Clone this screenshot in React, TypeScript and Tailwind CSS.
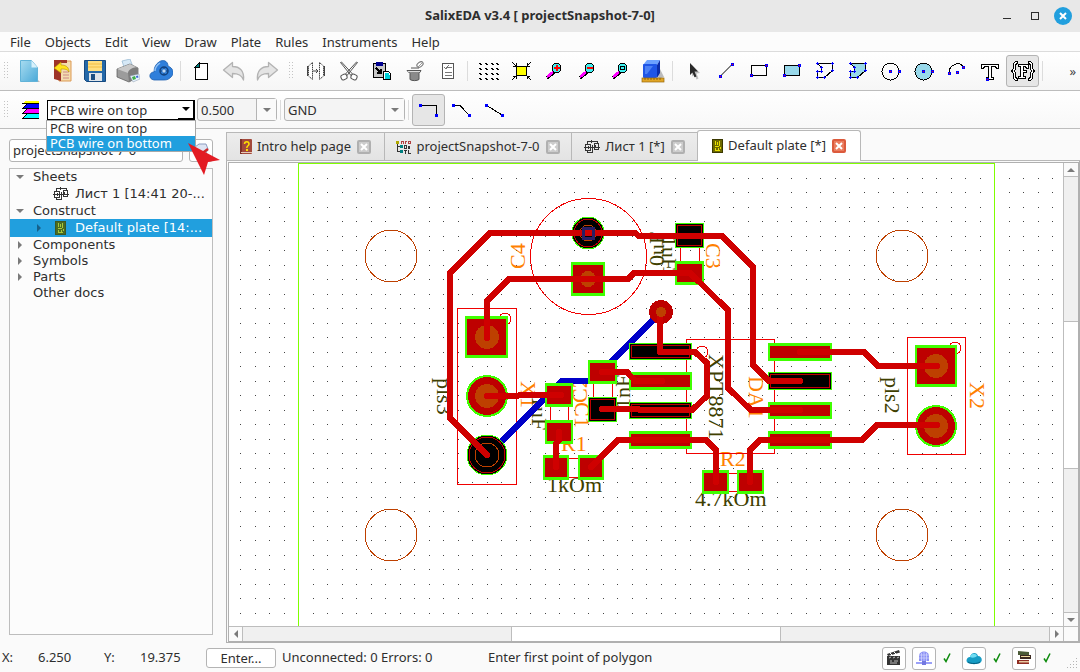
import React from "react";
import clsx from "clsx";

const UI_FONT = "font-['Noto_Sans','Open_Sans',sans-serif]";
const TREE_FONT = "font-['DejaVu_Sans',sans-serif]";

const MENU = ["File", "Objects", "Edit", "View", "Draw", "Plate", "Rules", "Instruments", "Help"];

/* ---------- small shared pieces ---------- */

const Icon: React.FC<{ children: React.ReactNode; crisp?: boolean }> = ({ children, crisp = true }) => (
  <svg
    width="24"
    height="24"
    viewBox="0 0 24 24"
    fill="none"
    aria-hidden="true"
    shapeRendering={crisp ? "crispEdges" : "auto"}
  >
    {children}
  </svg>
);

const Grip = () => (
  <div className="w-3 shrink-0 flex justify-center">
    <svg width="5" height="18" aria-hidden="true">
      {[0, 3, 6, 9, 12, 15].map((y) => (
        <g key={y} fill="#c4c4c4">
          <rect x="0" y={y} width="1" height="1" />
          <rect x="3" y={y} width="1" height="1" />
        </g>
      ))}
    </svg>
  </div>
);

const Separator = () => (
  <div className="w-[7px] shrink-0 flex justify-center">
    <div className="w-px h-5 bg-[#dcdcdc]" />
  </div>
);

const Handle: React.FC<{ x: number; y: number }> = ({ x, y }) => (
  <>
    <rect x={x - 1} y={y - 1} width="3" height="3" fill="#0000ff" />
    <rect x={x} y={y} width="1" height="1" fill="#ff0000" />
  </>
);

const Dot: React.FC<{ x: number; y: number }> = ({ x, y }) => (
  <rect x={x - 1} y={y - 1} width="3" height="3" fill="#0000ff" />
);

const ToolButton: React.FC<{ label: string; pressed?: boolean; children: React.ReactNode }> = ({
  label,
  pressed,
  children,
}) => (
  <button
    type="button"
    aria-label={label}
    aria-pressed={pressed}
    className={clsx(
      "w-[33px] h-8 shrink-0 flex items-center justify-center rounded-[3px]",
      pressed && "bg-[#e6e6e6] border border-[#b4b4b4]"
    )}
  >
    {children}
  </button>
);

const Triangle: React.FC<{ dir: "down" | "up" | "left" | "right"; color?: string }> = ({
  dir,
  color = "#7a7a7a",
}) => {
  const paths = {
    down: "M0 2h8L4 6z",
    up: "M0 6h8L4 2z",
    left: "M6 0v8L2 4z",
    right: "M2 0v8L6 4z",
  };
  return (
    <svg width="8" height="8" aria-hidden="true">
      <path d={paths[dir]} fill={color} />
    </svg>
  );
};

/* ---------- document icons ---------- */

const SheetIcon = () => (
  <svg width="16" height="14" viewBox="0 0 16 14" fill="none" stroke="#333" aria-hidden="true" shapeRendering="crispEdges">
    <path d="M3.5 4V1.500h10V4M7.500 0v3M0 7.500h16M3.500 10v2.500h5M8.500 5v8M4.500 6v3M11.500 5v3" />
    <rect x="1.500" y="4.500" width="5" height="6" />
    <rect x="10.500" y="3.500" width="4" height="6" />
  </svg>
);

const PlateIcon: React.FC<{ dim?: boolean }> = ({ dim }) => (
  <svg width="11" height="14" viewBox="0 0 11 14" aria-hidden="true" shapeRendering="crispEdges">
    <rect x="0.5" y="0.5" width="10" height="13" fill={dim ? "#4a6b22" : "#6e6a00"} stroke={dim ? "#3d5820" : "#3a3800"} />
    <path
      d="M3.500 2v4M5.500 3v3M7.500 2v5M3 7.500h4M3.500 9v3M4 11.500h4M6.500 9v2M8.500 8v2"
      fill="none"
      stroke={dim ? "#a8c83c" : "#e8e000"}
    />
  </svg>
);

const HelpIcon = () => (
  <svg width="12" height="15" viewBox="0 0 12 15" aria-hidden="true">
    <rect width="12" height="15" rx="1" fill="#a34a3c" />
    <rect width="2" height="15" fill="#7c3028" />
    <rect x="1" y="13" width="11" height="1" fill="#e6c9b8" />
    <path d="M4.500 5c0-3 4.500-3 4.500 0 0 2-2.200 1.500-2.200 4" fill="none" stroke="#ffe000" strokeWidth="1.500" />
    <rect x="6" y="10" width="2" height="2" fill="#ffe000" />
  </svg>
);

const ProjectIcon = () => (
  <svg width="15" height="14" viewBox="0 0 15 14" aria-hidden="true" shapeRendering="crispEdges" fill="none">
    <rect x="0" y="1" width="3" height="3" fill="#b0a800" />
    <path d="M1.500 4v8M1 6.500h4M1 11.500h4" stroke="#333" />
    <path d="M5.500 1v3M7.500 1v3M5 1.500h2M9.500 1v3M9 1.500h2M12.500 1v3M14.500 1v3M12 1.500h2M12 3.500h2" stroke="#b04040" />
    <rect x="4" y="5" width="3" height="3" fill="#008080" />
    <rect x="4" y="10" width="3" height="3" fill="#008080" />
    <path d="M8.500 6v3M10.500 6v3M8 5.500h3M8 8.500h3M12 6l2 3M14 6l-2 3M8 10.500h3M9.500 10v4M12.500 10v4M12 13.500h3" stroke="#333" />
  </svg>
);

/* ---------- main toolbar ---------- */

const MainToolbar = () => (
  <div className="h-[39px] flex items-center border-b border-[#bdbdbd] bg-gradient-to-b from-white to-[#f6f6f6]">
    <Grip />
    <ToolButton label="New">
      <Icon crisp={false}>
        <defs>
          <linearGradient id="doc" x1="0" y1="0" x2="1" y2="1">
            <stop offset="0" stopColor="#a9dcf0" />
            <stop offset="1" stopColor="#4aa9d8" />
          </linearGradient>
        </defs>
        <path d="M5 23h18l-3-3z" fill="#bbb" />
        <path d="M3.500 1.500h11l6 7v14h-17z" fill="url(#doc)" stroke="#62b3d8" />
        <path d="M14.500 1.500v7h6z" fill="#d8f1fb" />
      </Icon>
    </ToolButton>
    <ToolButton label="Open">
      <Icon crisp={false}>
        <path d="M9 2h12v20H9z" fill="#f3dcae" stroke="#dd9a55" />
        <path d="M13 13h6M13 16h6M13 19h6" stroke="#c88" />
        <path d="M4 1h13v3H11v18L4 20z" fill="#9e3428" />
        <path d="M4 9l7-6v3c6 0 8 3 8 7-2-3-4-3-8-3v4z" fill="#ffe11c" stroke="#b48c00" strokeWidth=".6" />
      </Icon>
    </ToolButton>
    <ToolButton label="Save">
      <Icon crisp={false}>
        <path d="M1.500 1.500h21v21h-19l-2-2z" fill="#2468a8" stroke="#174a80" />
        <rect x="5" y="2" width="14" height="10" fill="#ffdf80" />
        <path d="M5 5h14M5 8h14" stroke="#f2bd45" />
        <rect x="6" y="14" width="13" height="8" fill="#dfe5ea" />
        <rect x="8" y="15" width="4" height="6" fill="#1c4f82" />
      </Icon>
    </ToolButton>
    <ToolButton label="Print">
      <Icon crisp={false}>
        <path d="M6 2l8-2 3 8-8 3z" fill="#d6e8f6" stroke="#8fb3cf" strokeWidth=".7" />
        <path d="M1 10l13-5 8 4v9l-9 5-12-5z" fill="#9c9c9c" stroke="#555" strokeWidth=".7" />
        <path d="M1 10l13-5 8 4-10 5z" fill="#c9c9c9" />
        <path d="M12 14c0-4 10-8 10-4v8l-9 5z" fill="#7d7d7d" />
        <path d="M14 17l9-2 1 5-7 3z" fill="#e8f4ff" stroke="#89a" strokeWidth=".5" />
        <path d="M16 18l3-1 1 3-3 1z" fill="#3fae49" />
        <path d="M20 17l2-.5.500 2-2 .5z" fill="#3a62d0" />
      </Icon>
    </ToolButton>
    <ToolButton label="Cloud">
      <Icon crisp={false}>
        <path
          d="M5 21c-6-1-5-8 0-8 0-5 2-8 5-10 4-3 9-1 9 4 5 2 7 7 3 11-3 3-5 3-8 3z"
          fill="#2f7fdb"
          stroke="#2061b0"
          strokeWidth=".8"
        />
        <path d="M6 12c0-4 2-6 5-8" stroke="#8fc0f4" strokeWidth="1.500" />
        <circle cx="15" cy="12" r="4" stroke="#12427e" strokeWidth="1.500" />
        <path d="M15 8v8M11 12h8" stroke="#12427e" />
        <circle cx="15" cy="12" r="1.700" fill="#bcd8f5" />
      </Icon>
    </ToolButton>
    <Separator />
    <ToolButton label="Sheet">
      <Icon>
        <path d="M10 4.500h8v16H6.500V8z" fill="#fff" stroke="#000" />
        <path d="M6 8l4-4v4z" fill="#008080" stroke="#000" />
      </Icon>
    </ToolButton>
    <ToolButton label="Undo">
      <Icon crisp={false}>
        <path
          d="M1.500 11L10.500 3.500v4c7 0 12 4 11 13.500-2-5-5-6.500-11-6.500v4z"
          fill="#e4e4e4"
          stroke="#b3b3b3"
          strokeWidth="1.300"
          strokeLinejoin="round"
        />
      </Icon>
    </ToolButton>
    <ToolButton label="Redo">
      <Icon crisp={false}>
        <path
          d="M22.500 11L13.500 3.500v4c-7 0-12 4-11 13.500 2-5 5-6.500 11-6.500v4z"
          fill="#e4e4e4"
          stroke="#b3b3b3"
          strokeWidth="1.300"
          strokeLinejoin="round"
        />
      </Icon>
    </ToolButton>
    <div className="w-4 shrink-0 flex justify-center">
      <Grip />
    </div>
    <ToolButton label="Distance">
      <Icon crisp={false}>
        <g stroke="#444" fill="#fff">
          <path d="M8.500 3.500v17L4.500 17V7zM15.500 3.500v17l4-3.500V7z" strokeDasharray="1.500 .6" />
          <path d="M3.500 7v10M20.500 7v10" />
          <path d="M9 12h5M12 10l2 2-2 2" />
        </g>
      </Icon>
    </ToolButton>
    <ToolButton label="Cut">
      <Icon crisp={false}>
        <g stroke="#555" fill="#fff">
          <path d="M3.500 3.500l1-.5 11 12-1.500 1.500zM20.500 3.500l-1-.5-11 12 1.500 1.500z" />
          <rect x="4" y="15.500" width="6" height="5" rx="2" transform="rotate(-25 7 18)" />
          <rect x="14" y="15.500" width="6" height="5" rx="2" transform="rotate(25 17 18)" />
        </g>
      </Icon>
    </ToolButton>
    <ToolButton label="Paste">
      <Icon>
        <rect x="3.500" y="4.500" width="12" height="14" rx="1" fill="#c8c8c8" stroke="#000" />
        <rect x="6" y="3" width="7" height="4" fill="#000090" />
        <path d="M6 9l5 5M11 10v4H7" stroke="#000" strokeWidth="1.500" />
        <path d="M13.500 12.500h5l2 2v6h-7z" fill="#fff" stroke="#000" />
        <path d="M15 15h4M15 17h5M15 19h5" stroke="#00d0d8" strokeWidth="1.300" />
      </Icon>
    </ToolButton>
    <ToolButton label="Clear">
      <Icon crisp={false}>
        <path d="M4 11.500h14l-2 3v6c-2 1.500-7 1.500-9 0v-6z" fill="#8a8a8a" stroke="#555" />
        <path d="M5 12.500h12" stroke="#ddd" />
        <path d="M8 9h8" stroke="#555" />
        <ellipse cx="17" cy="5.500" rx="3.500" ry="2.200" transform="rotate(-35 17 5.500)" stroke="#777" fill="#fff" />
        <path d="M15 8l4-4" stroke="#999" />
      </Icon>
    </ToolButton>
    <ToolButton label="Check list">
      <Icon>
        <rect x="6.500" y="4.500" width="11" height="15" fill="#fff" stroke="#555" />
        <path d="M12 8.500h4M9 13.500h7M9 16.500h7" stroke="#777" />
        <path d="M8 8l2 2 3-4" stroke="#777" />
      </Icon>
    </ToolButton>
    <Separator />
    <ToolButton label="Grid">
      <Icon>
        {[3, 9, 15, 20].map((x) =>
          [4, 9, 14, 19].map((y) => (
            <path key={`${x}-${y}`} d={`M${x} ${y}h2v1h1v1h-2v-1h-1z`} fill="#000" />
          ))
        )}
      </Icon>
    </ToolButton>
    <ToolButton label="Fit">
      <Icon>
        <rect x="7.500" y="7.500" width="10" height="9" fill="#ffff00" stroke="#000" />
        <path
          d="M3 3l4 4M22 3l-4 4M3 21l4-4M22 21l-4-4M7 4v3H4M18 4v3h3M4 17h3v3M21 17h-3v3"
          stroke="#000"
        />
      </Icon>
    </ToolButton>
    {["Zoom in", "Zoom out", "Zoom page"].map((name, index) => (
      <ToolButton key={name} label={name}>
        <Icon>
          <path d="M5 19l7-6" stroke="#000" strokeWidth="3.500" />
          <path d="M5 18l6-5" stroke="#ff00ff" strokeWidth="2.500" />
          <circle cx="14.500" cy="9" r="4.500" fill="#40f0f0" stroke="#000" />
          {index === 0 && <path d="M12 9h6M15 6v6" stroke="#f00" strokeWidth="2" />}
          {index === 1 && <path d="M12 9h6" stroke="#f00" strokeWidth="2" />}
          {index === 2 && <rect x="12.500" y="7.500" width="4" height="3" stroke="#000" />}
        </Icon>
      </ToolButton>
    ))}
    <ToolButton label="3D view">
      <Icon crisp={false}>
        <path d="M18 8l5 10-6 2z" fill="#bbb" />
        <path d="M2 6l4-5h13l-3 5z" fill="#6ca1ff" />
        <rect x="2" y="5" width="14" height="14" rx="1" fill="#1f55e6" />
        <path d="M16 6l3-5v13l-3 5z" fill="#0c2da8" />
        <path d="M4 7h8l-6 8H4z" fill="#4b80f5" />
        <rect x="1" y="19" width="22" height="4" fill="#e0a526" stroke="#97690c" strokeWidth=".7" />
        <path d="M4 19v2M7 19v2M10 19v2M13 19v2M16 19v2M19 19v2" stroke="#7d5606" strokeWidth=".8" />
      </Icon>
    </ToolButton>
    <Separator />
    <ToolButton label="Select">
      <Icon crisp={false}>
        <path d="M11 6l8 8-3.500.5 2 5-2 1-2-5-2.500 2z" fill="#999" opacity=".6" />
        <path d="M9 4l8 8.500h-3.500l2 5-2 .8-2-4.800L9 16z" fill="#2a2a2a" />
      </Icon>
    </ToolButton>
    <ToolButton label="Line">
      <Icon crisp={false}>
        <path d="M6 17.500L18 5.500" stroke="#000" />
        <Handle x={6} y={17} />
        <Handle x={18} y={5} />
      </Icon>
    </ToolButton>
    <ToolButton label="Rectangle">
      <Icon>
        <rect x="4.500" y="6.500" width="15" height="10" stroke="#000" />
        <Handle x={4} y={16} />
        <Handle x={19} y={6} />
      </Icon>
    </ToolButton>
    <ToolButton label="Filled rectangle">
      <Icon>
        <rect x="4.500" y="6.500" width="15" height="10" fill="#98d8ea" stroke="#000" />
        <Handle x={4} y={16} />
        <Handle x={19} y={6} />
      </Icon>
    </ToolButton>
    {["Polygon", "Filled polygon"].map((name, index) => (
      <ToolButton key={name} label={name}>
        <Icon>
          <path
            d="M4.500 4.500h15v7l-8 7h-7v-6h4v-4z"
            fill={index ? "#98d8ea" : "none"}
            stroke="#000"
          />
          <g stroke="#0000ff">
            <path d="M3 4.500h3M4.500 3v3M18 4.500h3M19.500 3v3M18 11.500h3M19.500 10v3M10 18.500h3M11.500 17v3" />
            <path d="M3 18.500h3M4.500 17v3M3 12.500h3M4.500 11v3M7 8.500h3M8.500 7v3M7 12.500h3M8.500 11v3" />
          </g>
        </Icon>
      </ToolButton>
    ))}
    <ToolButton label="Circle">
      <Icon>
        <circle cx="11.500" cy="12.500" r="8.500" stroke="#000" />
        <Handle x={11} y={12} />
        <Handle x={20} y={12} />
      </Icon>
    </ToolButton>
    <ToolButton label="Filled circle">
      <Icon>
        <circle cx="11.500" cy="12.500" r="8.500" fill="#98d8ea" stroke="#000" />
        <Handle x={11} y={12} />
        <Handle x={20} y={12} />
      </Icon>
    </ToolButton>
    <ToolButton label="Arc">
      <Icon>
        <path d="M4 14C4 5 15 2 18 8" stroke="#000" />
        <Handle x={4} y={14} />
        <Handle x={12} y={13} />
        <Handle x={18} y={8} />
      </Icon>
    </ToolButton>
    <ToolButton label="Text">
      <Icon>
        <path d="M3.500 5.500h17v4h-2l-1-2h-4v11h2v2h-7v-2h2v-11h-4l-1 2h-2z" fill="#fff" stroke="#000" />
        <Handle x={9} y={20} />
      </Icon>
    </ToolButton>
    <ToolButton label="Text field" pressed>
      <Icon>
        <g stroke="#000" fill="#fff">
          <path d="M6.500 2.500h-2l-2 2v5l-2 2.500 2 2.500v5l2 2h2v-2l-2-1v-4l-1-2.500 1-2.500v-4l2-1z" />
          <path d="M17.500 2.500h2l2 2v5l2 2.500-2 2.500v5l-2 2h-2v-2l2-1v-4l1-2.500-1-2.500v-4l-2-1z" />
          <path d="M7.500 5.500h10v4h-2l-1-2h-2v4h3v2h-3v4h2v2h-7v-2h2v-10h-2z" />
        </g>
      </Icon>
    </ToolButton>
    <Separator />
    <button type="button" aria-label="More tools" className="ml-auto mr-1 leading-5 text-[#444]">
      »
    </button>
  </div>
);

/* ---------- wire toolbar ---------- */

const ComboBox: React.FC<{ label: string; value: string; className: string }> = ({ label, value, className }) => (
  <div
    className={clsx(
      "h-[23px] shrink-0 flex items-center rounded-[3px] border border-[#b4b4b4] bg-[#f4f4f4]",
      className
    )}
  >
    <select aria-label={label} className="appearance-none flex-1 min-w-0 px-[3px] outline-none bg-transparent leading-5">
      <option>{value}</option>
    </select>
    <div className="w-5 h-full flex items-center justify-center border-l border-[#b4b4b4] bg-[#fafafa]">
      <Triangle dir="down" />
    </div>
  </div>
);

const LayerCombo = () => (
  <div className="relative w-[148px] shrink-0 ml-1 mr-[2px]">
    <div className="h-5 flex border border-black bg-white">
      <select aria-label="Layer" className="appearance-none flex-1 min-w-0 px-[2px] outline-none leading-4">
        <option>PCB wire on top</option>
        <option>PCB wire on bottom</option>
      </select>
      <div className="w-4 flex items-center justify-center border-r border-b border-black">
        <Triangle dir="down" color="#000" />
      </div>
    </div>
    <ul
      role="listbox"
      aria-label="Layers"
      className="absolute z-20 top-5 -left-px w-[150px] border border-[#a8a8a8] bg-white leading-[15px]"
    >
      <li role="option" aria-selected="false" className="px-[3px]">
        PCB wire on top
      </li>
      <li role="option" aria-selected="true" className="px-[3px] bg-[#219fde] text-white">
        PCB wire on bottom
      </li>
    </ul>
    <svg className="absolute z-30 left-[141px] top-[43px]" width="34" height="34" aria-hidden="true">
      <path d="M0 0l32 17-12 2-4 13z" fill="#e31b23" />
    </svg>
  </div>
);

const WireToolbar = () => (
  <div className="h-[38px] flex items-center border-b border-[#bdbdbd] bg-gradient-to-b from-white to-[#f8f8f8]">
    <Grip />
    <button type="button" aria-label="Layers" className="w-[31px] shrink-0 flex justify-end pr-1">
      <svg width="17" height="18" aria-hidden="true" shapeRendering="crispEdges">
        <path d="M3 0h14v2H1z" fill="#ffff00" />
        <path d="M5 3h12v4H1z" fill="#0000ff" />
        <path d="M5 8h12v4H1z" fill="#ff00ff" />
        <path d="M5 13h12v4H1z" fill="#00ffff" />
        <path d="M0 2.500h17M0 7.500h17M0 12.500h17M0 17.500h17M1 7l4-4M1 12l4-4M1 17l4-4" stroke="#000" />
      </svg>
    </button>
    <LayerCombo />
    <ComboBox label="Width" value="0.500" className="w-20" />
    <Separator />
    <ComboBox label="Net" value="GND" className="w-[121px]" />
    <Separator />
    <ToolButton label="Right angle" pressed>
      <Icon>
        <path d="M4 7.500h15.500V17" stroke="#000" />
        <Dot x={3} y={7} />
        <Dot x={19} y={17} />
      </Icon>
    </ToolButton>
    <ToolButton label="Diagonal bend">
      <Icon>
        <path d="M3 7.500h7l9 9.500" stroke="#000" />
        <Dot x={3} y={7} />
        <Dot x={19} y={17} />
      </Icon>
    </ToolButton>
    <ToolButton label="Straight">
      <Icon>
        <path d="M3 7l16 10" stroke="#000" />
        <Dot x={3} y={7} />
        <Dot x={19} y={17} />
      </Icon>
    </ToolButton>
  </div>
);

/* ---------- project dock ---------- */

interface TreeRow {
  text: string;
  arrow?: "down" | "right";
  icon?: React.ReactNode;
  selected?: boolean;
}

const TREE: TreeRow[] = [
  { text: "Sheets", arrow: "down" },
  { text: "Лист 1 [14:41 20-...", icon: <SheetIcon /> },
  { text: "Construct", arrow: "down" },
  { text: "Default plate [14:...", arrow: "right", icon: <PlateIcon dim />, selected: true },
  { text: "Components", arrow: "right" },
  { text: "Symbols", arrow: "right" },
  { text: "Parts", arrow: "right" },
  { text: "Other docs" },
];

const ProjectDock = () => (
  <aside className="w-[213px] shrink-0 flex flex-col pl-[9px] pt-[10px] pb-2">
    <div className="flex items-center justify-between mb-[6px]">
      <div className="w-[174px] h-[23px] flex items-center rounded-[3px] border border-[#b4b4b4] bg-white">
        <select aria-label="Project" className="appearance-none w-full px-[3px] outline-none bg-transparent">
          <option>projectSnapshot-7-0</option>
        </select>
      </div>
      <button
        type="button"
        aria-label="Close project"
        className="w-6 h-[23px] flex items-center justify-center rounded-[3px] border border-[#b4b4b4] bg-white"
      >
        <svg width="16" height="16" aria-hidden="true">
          <path d="M2 4l4-3h7l2 5-3 6H3z" fill="#dde4f3" stroke="#8d9cc0" />
          <path d="M3 8l9 6M15 6l-11 8" stroke="#d02828" strokeWidth="2.500" />
        </svg>
      </button>
    </div>
    <ul role="tree" className={clsx("flex-1 border border-[#bdbdbd] bg-[#fcfcfc]", TREE_FONT)}>
      {TREE.map((row) => (
        <li
          key={row.text}
          role="treeitem"
          aria-selected={!!row.selected}
          className={clsx(
            "flex items-center whitespace-nowrap",
            row.icon ? "h-[18px]" : "h-4",
            row.selected && "bg-[#219fde] text-white"
          )}
        >
          <span className={clsx("w-5 mr-[3px] shrink-0 flex justify-center", row.icon && "ml-[19px]")}>
            {row.arrow && <Triangle dir={row.arrow} color={row.selected ? "#16608a" : "#7a7a7a"} />}
          </span>
          {row.icon && <span className="w-[23px] shrink-0 flex justify-center pr-[6px]">{row.icon}</span>}
          {row.text}
        </li>
      ))}
    </ul>
  </aside>
);

/* ---------- tabs ---------- */

const TABS = [
  { text: "Intro help page", icon: <HelpIcon />, width: "w-[158px]" },
  { text: "projectSnapshot-7-0", icon: <ProjectIcon />, width: "w-[187px]" },
  { text: "Лист 1 [*]", icon: <SheetIcon />, width: "w-[126px]" },
  { text: "Default plate [*]", icon: <PlateIcon />, width: "w-[164px]", active: true },
];

const TabBar = () => (
  <div role="tablist" className="flex items-end h-[31px]">
    {TABS.map((tab) => (
      <div
        key={tab.text}
        role="tab"
        aria-selected={!!tab.active}
        className={clsx(
          "shrink-0 flex items-center justify-center border-t border-l border-[#b8b8b8]",
          tab.width,
          tab.active
            ? "h-[31px] rounded-t-[3px] border-r bg-white"
            : "h-[29px] border-b bg-gradient-to-b from-[#ededed] to-[#e3e3e3]"
        )}
      >
        <span className="mr-[5px]">{tab.icon}</span>
        <span>{tab.text}</span>
        <button
          type="button"
          aria-label={`Close ${tab.text}`}
          className={clsx(
            "ml-[6px] size-[14px] rounded-[2px] border-2 flex items-center justify-center",
            tab.active ? "bg-[#ea7c5e] border-[#dc5a3c]" : "bg-[#cccccc] border-[#b0b0b0]"
          )}
        >
          <svg width="8" height="8" className="shrink-0" aria-hidden="true">
            <path d="M1 1l6 6M7 1L1 7" stroke="#fff" strokeWidth="2" />
          </svg>
        </button>
      </div>
    ))}
    <div className="flex-1 h-px bg-[#b8b8b8]" />
  </div>
);

/* ---------- board ---------- */

type Box = [number, number, number, number];

const COPPER = "#be0000";
const TRACE = "#cf0000";
const MASK = "#40ff00";
const HOLE = "#be4000";

const Pad: React.FC<{ box: Box }> = ({ box: [x, y, w, h] }) => (
  <>
    <rect x={x} y={y} width={w} height={h} fill={MASK} />
    <rect x={x + 2} y={y + 3} width={w - 4} height={h - 6} fill={COPPER} />
  </>
);

const BarePad: React.FC<{ box: Box }> = ({ box: [x, y, w, h] }) => (
  <>
    <rect x={x} y={y} width={w} height={h} fill={MASK} />
    <rect x={x + 1} y={y + 1} width={w - 2} height={h - 2} fill="#000" />
    <rect x={x + 2.5} y={y + 2.5} width={w - 5} height={h - 5} fill="none" stroke={COPPER} />
  </>
);

const PADS: Box[] = [
  [571, 262, 34, 34],
  [465, 316, 43, 42],
  [915, 345, 42, 42],
  [675, 261, 29, 24],
  [588, 360, 29, 24],
  [545, 383, 28, 24],
  [545, 420, 28, 24],
  [543, 455, 26, 25],
  [578, 455, 26, 25],
  [702, 470, 27, 24],
  [737, 470, 27, 24],
  [629, 372, 63, 18],
  [629, 431, 63, 18],
  [768, 343, 64, 18],
  [768, 402, 64, 17],
  [768, 431, 64, 18],
];

const BARE_PADS: Box[] = [
  [675, 223, 29, 25],
  [588, 397, 29, 25],
  [629, 343, 63, 17],
  [629, 402, 63, 17],
  [768, 372, 64, 18],
];

const TRACES = [
  "487,455 450,418 450,273 490,233 635,233 639,236 722,236 753,267 753,365 769,381 800,381",
  "487,338 487,301 509,279 628,279 634,273 690,273 728,310 728,388 751,410 800,410",
  "660,312 660,352 695,352 707,363 707,396 692,410 640,410 638,409 602,409",
  "602,372 627,372 635,381 662,381",
  "487,396 517,396 520,395 561,395",
  "559,432 559,440 556,444 556,467",
  "591,467 618,440 706,440 716,450 716,482",
  "750,482 750,450 760,440 862,440 877,425 937,425",
  "800,352 864,352 878,366 937,366",
];

const LABELS = [
  { text: "C4", x: 525, y: 269, turn: -90, fill: "#ff8000" },
  { text: "C3", x: 706, y: 243, turn: 90, fill: "#ff8000" },
  { text: "X1", x: 521, y: 381, turn: 90, fill: "#ff8000" },
  { text: "C1", x: 575, y: 402, turn: 90, fill: "#ff8000" },
  { text: "C2", x: 587, y: 403, turn: -90, fill: "#ff8000" },
  { text: "R1", x: 561, y: 451, turn: 0, fill: "#ff8000" },
  { text: "R2", x: 720, y: 466, turn: 0, fill: "#ff8000" },
  { text: "DA1", x: 749, y: 376, turn: 90, fill: "#ff8000" },
  { text: "X2", x: 970, y: 382, turn: 90, fill: "#ff8000" },
  { text: "XPT8871", x: 709, y: 354, turn: 90, fill: "#404000" },
  { text: "pls3", x: 437, y: 378, turn: 90, fill: "#404000" },
  { text: "pls2", x: 885, y: 377, turn: 90, fill: "#404000" },
  { text: "1uF", x: 532, y: 396, turn: 90, fill: "#404000" },
  { text: "1nF", x: 630, y: 409, turn: -90, fill: "#404000" },
  { text: "10uF", x: 664, y: 277, turn: -90, fill: "#404000" },
  { text: "1uF", x: 662, y: 236, turn: 90, fill: "#404000" },
  { text: "1kOm", x: 547, y: 492, turn: 0, fill: "#404000" },
  { text: "4.7kOm", x: 695, y: 506, turn: 0, fill: "#404000" },
];

const Board = () => (
  <svg className="flex-1 min-w-0 h-full" role="img" aria-label="Default plate" shapeRendering="crispEdges">
    <defs>
      <pattern id="grid" x="240" y="178" width="29" height="29" patternUnits="userSpaceOnUse">
        <rect x="0" y="0" width="1" height="1" fill="#444" />
        <rect x="15" y="0" width="1" height="1" fill="#444" />
        <rect x="0" y="14" width="1" height="1" fill="#444" />
        <rect x="15" y="14" width="1" height="1" fill="#444" />
      </pattern>
    </defs>
    {/* board coordinates start at the view's corner */}
    <g transform="translate(-229 -163)" fill="none">
      <rect x="229" y="170" width="4000" height="4000" fill="url(#grid)" />
      <path d="M298.500 3000V163.500H994.500V3000" stroke="#80ff00" />

      <g stroke={HOLE}>
        <circle cx="391" cy="256" r="26" />
        <circle cx="902" cy="256" r="26" />
        <circle cx="391" cy="535" r="26" />
        <circle cx="902" cy="535" r="26" />
      </g>

      <g fontFamily="'Liberation Serif', serif" fontSize="22" stroke="none">
        {LABELS.map((label, index) => (
          <text
            key={index}
            x={label.x}
            y={label.y}
            fill={label.fill}
            transform={`rotate(${label.turn} ${label.x} ${label.y})`}
          >
            {label.text}
          </text>
        ))}
      </g>

      <g stroke="#f00000">
        <circle cx="588.500" cy="256.500" r="58" />
        <rect x="457.500" y="308.500" width="59" height="176" />
        <rect x="907.500" y="337.500" width="58" height="117" />
        <rect x="686.500" y="339.500" width="88" height="114" />
        <circle cx="505" cy="319" r="6" />
        <circle cx="955" cy="348" r="6" />
        <circle cx="702" cy="352" r="6" />
        <path d="M680.500 248v13M699.500 248v13M593.500 384v13M612.500 384v13M550.500 407v13M568.500 407v13" />
        <path d="M569 458.500h9M569 477.500h9M729 473.500h8M729 491.500h8" />
      </g>

      <path d="M661 312L592 381H560M562 381L488 455" stroke="#0000c8" strokeWidth="6" />

      {PADS.map((box) => (
        <Pad key={box.join()} box={box} />
      ))}
      {BARE_PADS.map((box) => (
        <BarePad key={box.join()} box={box} />
      ))}

      <circle cx="588" cy="279" r="8" fill={HOLE} />
      <circle cx="487" cy="337" r="12" fill={HOLE} />
      <circle cx="936" cy="366" r="12" fill={HOLE} />
      {[
        [487, 396],
        [936, 426],
      ].map(([x, y]) => (
        <g key={x}>
          <circle cx={x} cy={y} r="21" fill={MASK} />
          <circle cx={x} cy={y} r="19" fill={COPPER} />
          <circle cx={x} cy={y} r="12" fill={HOLE} />
        </g>
      ))}
      <circle cx="487" cy="455" r="20" fill="#000" stroke={MASK} />
      <circle cx="487" cy="455" r="18" stroke={COPPER} />
      <circle cx="487" cy="455" r="12" stroke={HOLE} />
      <circle cx="588" cy="233" r="16" fill="#000" stroke={MASK} />
      <circle cx="588" cy="233" r="14" stroke={COPPER} />
      <circle cx="588" cy="233" r="8" stroke={HOLE} />
      <circle cx="661" cy="312" r="12" fill={COPPER} />

      <g stroke={TRACE} strokeWidth="6" strokeLinejoin="round" strokeLinecap="round">
        {TRACES.map((points) => (
          <polyline key={points} points={points} />
        ))}
      </g>
      <circle cx="661" cy="312" r="5" fill={HOLE} />
      <rect x="583.500" y="228.500" width="10" height="10" stroke="#281e64" strokeWidth="3" />
    </g>
  </svg>
);

const PlateView = () => (
  <section className="flex-1 min-h-0 flex flex-col border-l border-r border-b border-[#b0b0b0] pt-px pl-px">
    <div className="flex-1 min-h-0 flex flex-col border border-[#b0b0b0] bg-white">
      <div className="flex-1 min-h-0 flex">
        <Board />
        <div className="w-[15px] shrink-0 flex flex-col border-l border-[#bdbdbd] bg-[#f0f0f0]">
          <button type="button" aria-label="Scroll up" className="h-[14px] flex items-center justify-center border-b border-[#bdbdbd] bg-[#fafafa]">
            <Triangle dir="up" />
          </button>
          <div className="flex-[145]" />
          <div className="flex-[146] border-y border-[#bdbdbd] bg-white" />
          <div className="flex-[144]" />
          <button type="button" aria-label="Scroll down" className="h-[14px] flex items-center justify-center border-t border-[#bdbdbd] bg-[#fafafa]">
            <Triangle dir="down" />
          </button>
        </div>
      </div>
      <div className="h-[15px] shrink-0 flex border-t border-[#bdbdbd] bg-[#f0f0f0]">
        <button type="button" aria-label="Scroll left" className="w-[14px] flex items-center justify-center border-r border-[#bdbdbd] bg-[#fafafa]">
          <Triangle dir="left" />
        </button>
        <div className="flex-[268]" />
        <div className="flex-[269] border-x border-[#bdbdbd] bg-white" />
        <div className="flex-[268]" />
        <button type="button" aria-label="Scroll right" className="w-[14px] flex items-center justify-center border-l border-[#bdbdbd] bg-[#fafafa]">
          <Triangle dir="right" />
        </button>
        <div className="w-[15px] border-l border-[#bdbdbd] bg-[#fafafa]" />
      </div>
    </div>
  </section>
);

/* ---------- status bar ---------- */

const StatusButton: React.FC<{ label: string; children: React.ReactNode }> = ({ label, children }) => (
  <button
    type="button"
    aria-label={label}
    className="w-6 h-[23px] rounded-[3px] border border-[#b4b4b4] bg-white flex items-center justify-center"
  >
    <svg width="16" height="16" viewBox="0 0 16 16" aria-hidden="true">
      {children}
    </svg>
  </button>
);

const Check = () => (
  <svg className="w-[26px]" height="12" viewBox="0 0 26 12" aria-hidden="true">
    <path d="M8 6.500l2 3L14 1.500" fill="none" stroke="#0a8a0a" strokeWidth="1.500" />
  </svg>
);

const StatusBar = () => (
  <footer className="h-[29px] shrink-0 flex items-center pt-px bg-[#fafafa]">
    <span className="w-9 pl-0.5">X:</span>
    <span className="w-[68px] pl-0.5">6.250</span>
    <span className="w-9">Y:</span>
    <span className="w-[66px]">19.375</span>
    <button type="button" className="w-[70px] h-5 rounded-[3px] border border-[#b4b4b4] bg-white leading-4">
      Enter...
    </button>
    <span className="w-[212px] pl-[6px] whitespace-nowrap">Unconnected: 0 Errors: 0</span>
    <span className="whitespace-nowrap">Enter first point of polygon</span>
    <div className="ml-auto flex items-center">
      <StatusButton label="Movie">
        <path d="M1 4l12-4 1 2.500L2 6z" fill="#333" />
        <path d="M4 3l2 2M8 2l2 2" stroke="#fff" />
        <rect x="1" y="6" width="13" height="9" fill="#333" />
        <path d="M3 8l2-1M7 8l2-1M11 8l2-1M4 11h2M8 11h4M4 13h7" stroke="#bbb" />
      </StatusButton>
      <div className="w-[6px]" />
      <StatusButton label="Server">
        <path d="M3 11V6c0-6 10-6 10 0v5z" fill="#8d92f5" />
        <path d="M8 2v9M3 5h10M3 8h10M5.500 3v8M10.500 3v8" stroke="#d5d8ff" strokeWidth=".7" />
        <rect x="0" y="12" width="16" height="2" fill="#9aa0f8" />
        <rect x="6" y="11" width="4" height="4" fill="#7378e0" />
      </StatusButton>
      <Check />
      <StatusButton label="Cloud sync">
        <path d="M2 13c-3-2-1-6 2-6 1-5 7-5 8-1 4 0 5 5 2 7-3 1.500-9 1.500-12 0z" fill="#169cc4" />
        <path d="M4 7c1-4 6-4 7-1-2 2-5 2-7 1z" fill="#6fdcf2" />
        <path d="M2 12c3 2 9 2 12 0" stroke="#075c7c" fill="none" />
      </StatusButton>
      <Check />
      <StatusButton label="Library">
        <path d="M2 1l11 1v3H2z" fill="#4a5a36" />
        <path d="M4 5h11v4H4z" fill="#3b2a22" />
        <path d="M5 6h9v1H5z" fill="#f0dca0" />
        <path d="M1 10h12v4H1z" fill="#8f2c22" />
        <path d="M3 11h10v1.500H3z" fill="#e8c8a0" />
      </StatusButton>
      <Check />
      <svg width="18" height="20" className="self-end" aria-hidden="true" fill="#b4b4b4">
        {[0, 1, 2, 3].map((row) =>
          Array.from({ length: row + 1 }, (_, col) => (
            <rect key={`${row}-${col}`} x={14 - col * 3} y={8 + row * 3} width="1" height="1" />
          ))
        )}
      </svg>
    </div>
  </footer>
);

const App = () => (
  <div
    className={clsx(
      "h-screen min-h-[480px] flex flex-col overflow-hidden bg-[#fafafa] text-[13px] text-[#2e2e2e]",
      UI_FONT
    )}
  >
    <header className="h-8 shrink-0 flex items-center bg-[#e8e8e8]">
      <div className="w-[82px]" />
      <h1 className="flex-1 text-center font-bold">SalixEDA v3.4 [ projectSnapshot-7-0]</h1>
      <div className="w-[82px] flex items-center gap-[10px]">
        <button type="button" aria-label="Minimize" className="size-[18px] flex items-center justify-center">
          <span className="w-2 h-px mt-1 bg-[#2e2e2e]" />
        </button>
        <button type="button" aria-label="Maximize" className="size-[18px] flex items-center justify-center">
          <span className="size-2 border border-[#2e2e2e]" />
        </button>
        <button type="button" aria-label="Close" className="size-[18px] rounded-full flex items-center justify-center bg-[#219fde]">
          <svg width="8" height="8" aria-hidden="true">
            <path d="M1 1l6 6M7 1L1 7" stroke="#fff" strokeWidth="2" />
          </svg>
        </button>
      </div>
    </header>

    <nav className="h-5 shrink-0 flex items-center gap-[14px] pl-[10px] border-b border-[#dcdcdc] bg-[#fcfcfc]">
      {MENU.map((item) => (
        <button key={item} type="button" className="leading-4">
          {item}
        </button>
      ))}
    </nav>

    <div className="shrink-0">
      <MainToolbar />
      <WireToolbar />
    </div>

    <div className="flex-1 min-h-0 flex gap-[13px]">
      <ProjectDock />
      <main className="flex-1 min-w-0 flex flex-col pt-px">
        <TabBar />
        <PlateView />
      </main>
    </div>

    <StatusBar />
  </div>
);

export default App;
